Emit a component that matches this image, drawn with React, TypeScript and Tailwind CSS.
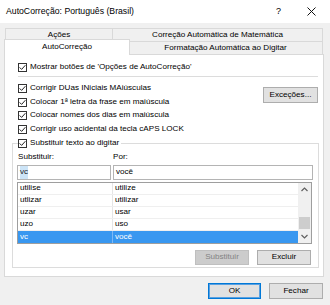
import React from 'react';

const rows: [string, string][] = [
  ['utilise', 'utilize'],
  ['utlizar', 'utilizar'],
  ['uzar', 'usar'],
  ['uzo', 'uso'],
  ['vc', 'você'],
];

function Check() {
  return (
    <span className="flex h-[9px] w-[9px] shrink-0 items-center justify-center border border-[#333333] bg-white">
      <svg width="7" height="7" viewBox="0 0 7 7">
        <path d="M0.6 3.4 L2.6 5.4 L6.4 1.2" fill="none" stroke="#222222" strokeWidth="1" />
      </svg>
    </span>
  );
}

function CheckRow({ label, h = 'h-[13px]' }: { label: string; h?: string }) {
  return (
    <div className={`flex items-center gap-[3px] ${h}`}>
      <Check />
      <span className="whitespace-nowrap">{label}</span>
    </div>
  );
}

function Chevron({ up }: { up?: boolean }) {
  return (
    <svg width="7" height="5" viewBox="0 0 7 5">
      <path d={up ? 'M0.5 4 L3.5 1 L6.5 4' : 'M0.5 1 L3.5 4 L6.5 1'} fill="none" stroke="#606060" strokeWidth="1.2" />
    </svg>
  );
}

export default function App() {
  return (
    <div className="h-[305px] w-[330px] overflow-hidden bg-[#f0f0f0] font-['Liberation_Sans',Arial,sans-serif] text-[8.1px] text-black">
      {/* title bar */}
      <div className="flex h-[23px] items-center bg-white pl-[6px]">
        <span className="text-[8.7px]">AutoCorreção: Português (Brasil)</span>
        <span className="ml-auto text-[9px]">?</span>
        <svg className="ml-[26px] mr-[14px]" width="9" height="9" viewBox="0 0 9 9">
          <path d="M0.5 0.5 L8.5 8.5 M8.5 0.5 L0.5 8.5" stroke="#111111" strokeWidth="1" />
        </svg>
      </div>

      {/* tabs */}
      <div className="ml-[5px] mt-[5px] flex h-[13px]">
        <div className="flex w-[108px] items-center justify-center border-x border-t border-[#d9d9d9]">Ações</div>
        <div className="-ml-px flex w-[211px] items-center justify-center border-x border-t border-[#d9d9d9]">
          Correção Automática de Matemática
        </div>
      </div>
      <div className="ml-[4px] flex h-[13px] items-end">
        <div className="relative z-10 -mb-px flex h-[16px] w-[126px] items-start justify-center border-x border-t border-[#d9d9d9] bg-white pt-[1px]">
          AutoCorreção
        </div>
        <div className="-ml-px flex h-[13px] w-[194px] items-center justify-center border-r border-t border-[#d9d9d9]">
          Formatação Automática ao Digitar
        </div>
      </div>

      {/* panel */}
      <div className="ml-[4px] flex h-[223px] w-[320px] flex-col border border-[#d9d9d9] bg-white">
        <div className="pl-[13px] pt-[6px]">
          <CheckRow label="Mostrar botões de 'Opções de AutoCorreção'" />
        </div>
        <div className="ml-[13px] mt-[2px] h-px w-[300px] bg-[#dcdcdc]" />

        <div className="mt-[5px] flex">
          <div className="flex flex-col pl-[13px]">
            <CheckRow label="Corrigir DUas INiciais MAiúsculas" />
            <CheckRow label="Colocar 1ª letra da frase em maiúscula" h="h-[14px]" />
            <CheckRow label="Colocar nomes dos dias em maiúscula" />
            <CheckRow label="Corrigir uso acidental da tecla cAPS LOCK" h="h-[14px]" />
          </div>
          <button className="ml-auto mr-[5px] mt-[5px] h-[16px] w-[55px] border border-[#adadad] bg-[#e1e1e1]">
            Exceções...
          </button>
        </div>

        <fieldset className="ml-[7px] w-[307px] border border-[#dcdcdc] pb-[2px]">
          <legend className="ml-[5px] pr-[2px]">
            <CheckRow label="Substituir texto ao digitar" h="h-[14px]" />
          </legend>

          <div className="mt-[1px] flex h-[12px] items-center pl-[5px]">
            <span className="w-[95px]">Substituir:</span>
            <span>Por:</span>
          </div>

          <div className="ml-[4px] mt-[2px] flex gap-[2px]">
            <div className="flex h-[15px] w-[94px] items-center border border-[#b4b4b4] pl-[2px]">
              <span className="bg-[#cce4f7] text-[#1a1a1a]">vc</span>
            </div>
            <div className="flex h-[15px] w-[200px] items-center border border-[#b4b4b4] pl-[2px]">você</div>
          </div>

          <div className="ml-[4px] mt-[2px] flex h-[62px] w-[295px] border border-[#9e9e9e]">
            <div className="flex w-[280px] flex-col">
              {rows.map(([a, b], i) => {
                const sel = i === rows.length - 1;
                return (
                  <div
                    key={a}
                    className={
                      sel
                        ? 'flex h-[12px] items-center bg-[#3897f0] text-white'
                        : 'flex h-[12px] items-center border-b border-[#efefef]'
                    }
                  >
                    <span className="w-[94px] pl-[2px]">{a}</span>
                    <span
                      className={
                        sel
                          ? 'flex h-full items-center border-l border-[#7db9f5] pl-[2px]'
                          : 'flex h-full items-center border-l border-[#e5e5e5] pl-[2px]'
                      }
                    >
                      {b}
                    </span>
                  </div>
                );
              })}
            </div>
            <div className="flex w-[13px] flex-col bg-[#f0f0f0]">
              <div className="flex h-[13px] items-center justify-center">
                <Chevron up />
              </div>
              <div className="flex flex-1 flex-col justify-end px-[1px] pb-[1px]">
                <div className="h-[12px] bg-[#cdcdcd]" />
              </div>
              <div className="flex h-[13px] items-center justify-center">
                <Chevron />
              </div>
            </div>
          </div>

          <div className="mt-[6px] flex justify-end gap-[8px] pr-[7px]">
            <button className="h-[15px] w-[54px] border border-[#bfbfbf] bg-[#cccccc] text-[#838383]">Substituir</button>
            <button className="h-[15px] w-[54px] border border-[#adadad] bg-[#e1e1e1]">Excluir</button>
          </div>
        </fieldset>
      </div>

      {/* dialog buttons */}
      <div className="mt-[6px] flex justify-end gap-[8px] pr-[7px]">
        <button className="h-[16px] w-[53px] border border-[#0078d7] bg-[#e1e1e1] shadow-[inset_0_0_0_1px_#5aa0e0]">OK</button>
        <button className="h-[16px] w-[54px] border border-[#adadad] bg-[#e1e1e1]">Fechar</button>
      </div>
    </div>
  );
}
